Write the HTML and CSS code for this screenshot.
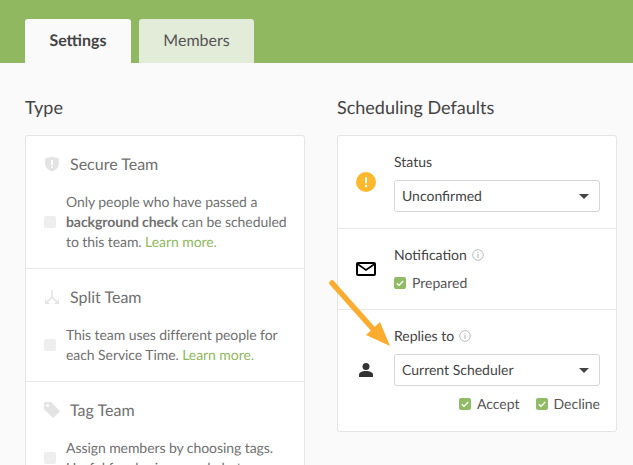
FILE: index.html
```html
<!DOCTYPE html>
<html lang="en">
<head>
<meta charset="utf-8">
<title>Team settings</title>
<link rel="stylesheet" href="styles.css">
</head>
<body>
<header class="tabbar">
  <div class="tab tab-active">Settings</div>
  <div class="tab">Members</div>
</header>
<main class="columns">
  <section>
    <h2 class="heading">Type</h2>
    <div class="card">
      <div class="type-row type-row-first">
        <div class="type-title">
          <svg class="type-icon" viewBox="0 0 16 16"><path fill="#e3e3e3" fill-rule="evenodd" d="M8 .5l6.800 2v5.200c0 3.600-2.800 6.300-6.800 7.800-4-1.500-6.800-4.200-6.800-7.800V2.500zM7 4v5h2V4zm0 6v2h2v-2z"/></svg>
          <span>Secure Team</span>
        </div>
        <div class="type-body">
          <span class="fake-check"></span>
          <p>Only people who have passed a <b>background check</b> can be scheduled to this team. <a>Learn more.</a></p>
        </div>
      </div>
      <div class="type-row">
        <div class="type-title">
          <svg class="type-icon" viewBox="0 0 16 16"><path fill="none" stroke="#e3e3e3" stroke-width="1.500" d="M8 1v7L2 14M8 8l6 6"/><path fill="#e3e3e3" d="M1 10v5h5l-1.500-1.500H2.500v-2zM15 10v5h-5l1.500-1.500h2v-2z"/></svg>
          <span>Split Team</span>
        </div>
        <div class="type-body">
          <span class="fake-check"></span>
          <p>This team uses different people for each Service Time. <a>Learn more.</a></p>
        </div>
      </div>
      <div class="type-row">
        <div class="type-title">
          <svg class="type-icon" viewBox="0 0 16 16"><path fill="#e3e3e3" fill-rule="evenodd" d="M0 1.500C0 .7.700 0 1.500 0h5.700L16 9.200 9.200 16 0 7.200zM3.500 2A1.500 1.500 0 1 0 3.500 5 1.500 1.500 0 0 0 3.500 2z"/></svg>
          <span>Tag Team</span>
        </div>
        <div class="type-body">
          <span class="fake-check"></span>
          <p>Assign members by choosing tags. Useful for sharing people between</p>
        </div>
      </div>
    </div>
  </section>
  <section>
    <h2 class="heading">Scheduling Defaults</h2>
    <div class="card">
      <div class="def-row def-status">
        <div class="def-icon">
          <svg width="20" height="20" viewBox="0 0 20 20"><circle cx="10" cy="10" r="10" fill="#fdb92e"/><rect x="9" y="5" width="2" height="6.500" rx="1" fill="#fff"/><circle cx="10" cy="14" r="1.200" fill="#fff"/></svg>
        </div>
        <div class="def-main">
          <div class="label">Status</div>
          <div class="select">Unconfirmed<span class="caret"></span></div>
        </div>
      </div>
      <div class="def-row def-notify">
        <div class="def-icon">
          <svg width="20" height="14" viewBox="0 0 20 14"><rect x="1" y="1" width="18" height="12" rx="1" fill="none" stroke="#000" stroke-width="2"/><path d="M1.500 2l8.500 6 8.500-6" fill="none" stroke="#000" stroke-width="1.600"/></svg>
        </div>
        <div class="def-main">
          <div class="label">Notification <svg class="info" viewBox="0 0 12 12"><circle cx="6" cy="6" r="5.300" fill="none" stroke="#bbb"/><rect x="5.400" y="5" width="1.200" height="3.800" fill="#bbb"/><rect x="5.400" y="3" width="1.200" height="1.200" fill="#bbb"/></svg></div>
          <div class="check-line"><span class="check"><svg viewBox="0 0 12 12"><path d="M2.800 6.200l2.200 2.200 4.200-4.400" fill="none" stroke="#fff" stroke-width="1.300"/></svg></span>Prepared</div>
        </div>
      </div>
      <div class="def-row def-replies">
        <div class="def-icon">
          <svg width="14" height="14" viewBox="0 0 14 14"><circle cx="7" cy="3.500" r="3.500" fill="#333"/><path d="M0 14v-2.500C0 9.300 3.500 8 7 8s7 1.300 7 3.500V14z" fill="#333"/></svg>
        </div>
        <div class="def-main">
          <div class="label">Replies to <svg class="info" viewBox="0 0 12 12"><circle cx="6" cy="6" r="5.300" fill="none" stroke="#bbb"/><rect x="5.400" y="5" width="1.200" height="3.800" fill="#bbb"/><rect x="5.400" y="3" width="1.200" height="1.200" fill="#bbb"/></svg></div>
          <div class="select">Current Scheduler<span class="caret"></span></div>
          <div class="check-pair">
            <div class="check-line"><span class="check"><svg viewBox="0 0 12 12"><path d="M2.800 6.200l2.200 2.200 4.200-4.400" fill="none" stroke="#fff" stroke-width="1.300"/></svg></span>Accept</div>
            <div class="check-line"><span class="check"><svg viewBox="0 0 12 12"><path d="M2.800 6.200l2.200 2.200 4.200-4.400" fill="none" stroke="#fff" stroke-width="1.300"/></svg></span>Decline</div>
          </div>
        </div>
      </div>
    </div>
  </section>
</main>
<svg class="arrow" width="64" height="70" viewBox="0 0 64 70"><path d="M3 4l41 46" fill="none" stroke="#fdac2f" stroke-width="5.500" stroke-linecap="round"/><path d="M61 67L37 56 51 43z" fill="#fdac2f"/></svg>
</body>
</html>
```
FILE: styles.css
```css
* { box-sizing: border-box; }
html, body { margin: 0; height: 465px; overflow: hidden; }
body {
  background: #fafafa;
  font-family: Lato, sans-serif;
  font-size: 14px;
  color: #444;
  position: relative;
  text-rendering: geometricPrecision;
}
.tabbar {
  height: 63px;
  background: #8fb860;
  padding: 19px 0 0 25px;
  display: flex;
  gap: 8px;
}
.tab {
  height: 44px;
  width: 115px;
  border-radius: 3px 3px 0 0;
  background: #e3ebd9;
  color: #555;
  font-size: 16px;
  line-height: 44px;
  text-align: center;
}
.tab-active {
  width: 106px;
  background: #fafafa;
  color: #444;
  font-weight: 700;
}
.columns {
  display: grid;
  grid-template-columns: 280px 280px;
  column-gap: 32px;
  padding: 0 0 0 25px;
}
.heading {
  margin: 33px 0 16px;
  font-size: 18px;
  font-weight: 400;
  line-height: 23px;
  color: #444;
}
.card {
  background: #fff;
  border: 1px solid #e5e5e5;
  border-radius: 3px;
}
.type-row {
  height: 113px;
  border-top: 1px solid #e8e8e8;
  padding: 17px 14px 0 18px;
}
.type-row-first { height: 132px; border-top: 0; }
.type-title {
  display: flex;
  align-items: center;
  gap: 10px;
  height: 22px;
  font-size: 16px;
  color: #707070;
}
.type-icon { width: 16px; height: 16px; flex: none; }
.type-body {
  display: flex;
  align-items: center;
  gap: 10px;
  margin-top: 17px;
  color: #707070;
  line-height: 20px;
  letter-spacing: -0.07px;
}
.type-body p { margin: 0; }
.type-body a { color: #8fb860; }
.fake-check {
  width: 12px;
  height: 12px;
  flex: none;
  border-radius: 2px;
  background: #eee;
}
.def-row {
  display: flex;
  align-items: center;
  border-top: 1px solid #e8e8e8;
  padding: 0 16px 0 18px;
}
.def-status { height: 92px; border-top: 0; }
.def-notify { height: 81px; }
.def-replies { height: 122px; padding-bottom: 2px; }
.def-icon {
  width: 38px;
  flex: none;
  display: flex;
  justify-content: center;
  padding-right: 18px;
}
.def-main { flex: 1; }
.label {
  font-size: 14px;
  line-height: 20px;
  margin-bottom: 8px;
  display: flex;
  align-items: center;
  gap: 5px;
}
.info { width: 12px; height: 12px; }
.select {
  height: 32px;
  border: 1px solid #d6d6d6;
  border-radius: 3px;
  background: #fff;
  padding: 0 7px;
  line-height: 30px;
  position: relative;
}
.caret {
  position: absolute;
  right: 10px;
  top: 13px;
  border-top: 5px solid #444;
  border-left: 5px solid transparent;
  border-right: 5px solid transparent;
}
.check-line {
  display: flex;
  align-items: center;
  gap: 6px;
  line-height: 20px;
  color: #555;
}
.check {
  width: 12px;
  height: 12px;
  flex: none;
  border-radius: 2px;
  background: #91bb67;
  display: flex;
}
.check svg { width: 12px; height: 12px; }
.check-pair {
  display: flex;
  justify-content: flex-end;
  gap: 16px;
  margin-top: 8px;
}
.arrow { position: absolute; left: 329px; top: 279px; }
```
